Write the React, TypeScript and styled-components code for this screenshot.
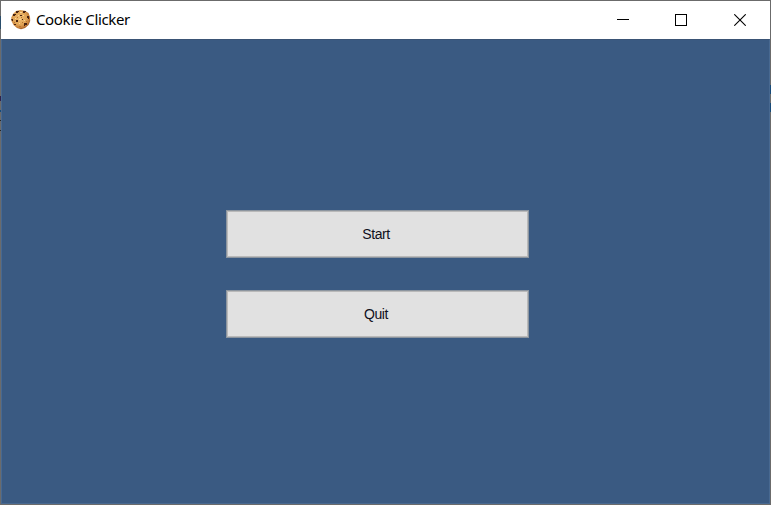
import React from 'react';
import styled, { createGlobalStyle } from 'styled-components';

const GlobalStyle = createGlobalStyle`
  * { box-sizing: border-box; }
  body { margin: 0; overflow: hidden; }
`;

const Window = styled.div`
  width: 771px;
  height: 505px;
  display: flex;
  flex-direction: column;
  border: 1px solid #6b6b6b;
  background: #fff;
`;

const TitleBar = styled.header`
  height: 38px;
  flex: none;
  display: flex;
  align-items: center;
  padding-left: 10px;
  background: #fff;
`;

const Title = styled.h1`
  margin: 0 0 2px 5px;
  flex: 1;
  font: 400 15px/20px 'Noto Sans', 'Open Sans', sans-serif;
  letter-spacing: -0.36px;
  color: #000;
`;

const Controls = styled.div`
  display: flex;
  height: 100%;
`;

const ControlButton = styled.button<{ $width: number }>`
  width: ${(p) => p.$width}px;
  height: 100%;
  padding: 0;
  border: 0;
  background: transparent;
  display: flex;
  align-items: center;
  justify-content: center;
`;

const Client = styled.main`
  flex: 1;
  display: flex;
  flex-direction: column;
  align-items: flex-start;
  gap: 32px;
  padding: 170px 0 0 224px;
  background: #3a5a82;
  border: 1px solid #486991;
  border-top-color: #3a5475;
`;

const MenuButton = styled.button`
  width: 303px;
  height: 48px;
  padding: 0 3px 0 0;
  border: 1px solid #8c959f;
  box-shadow: inset 0 0 0 1px #b9b9b9;
  background: #e1e1e1;
  color: #10101c;
  font: 400 14px/16px 'Liberation Sans', Arial, sans-serif;
  letter-spacing: -0.45px;
`;

const CookieIcon = () => (
  <svg width="20" height="20" viewBox="0 0 20 20">
    <defs>
      <radialGradient id="dough" cx=".45" cy=".42" r=".6">
        <stop offset="0" stopColor="#f0bd72" />
        <stop offset=".6" stopColor="#e0a355" />
        <stop offset=".85" stopColor="#c47c37" />
        <stop offset="1" stopColor="#85441a" />
      </radialGradient>
    </defs>
    <path d="M5 1 9 0l5 .8L17.5 3 19 7l.2 4-1.7 4L14 18l-4 1.3L6 18l-3.5-3L.5 11 .3 7.5 2 4Z" fill="url(#dough)" />
    <g fill="#4a2412">
      <path d="M5 1h3v1H7v1H5zM12 1h3v1h-1v1h-2zM2 4h3v1H4v1H2zM9 5h2v1H9zM16 6h2v3h-1V8h-1zM5 10h2v2H5zM0 9h2v2H1zM3 14h2v1H3zM13 13h3v2h-2v1h-1zM11 9h1v1h-1z" />
    </g>
    <g fill="#fbd596">
      <path d="M9 2h2v1H9zM7 5h1v1H7zM12 5h1v1h-1zM4 8h1v1H4zM8 9h2v1H8zM8 13h1v1H8zM13 10h1v1h-1z" />
    </g>
    <g fill="#b97333">
      <path d="M6 7h1v1H6zM10 7h1v1h-1zM3 12h1v1H3zM8 16h2v1H8zM11 12h1v1h-1zM15 11h1v1h-1z" />
    </g>
  </svg>
);

const MinimizeIcon = () => (
  <svg width="12" height="12" viewBox="0 0 12 12" shapeRendering="crispEdges">
    <rect y="5" width="12" height="1" />
  </svg>
);

const MaximizeIcon = () => (
  <svg width="12" height="12" viewBox="0 0 12 12" shapeRendering="crispEdges">
    <path d="M.5.5h11v11H.5z" fill="none" stroke="#000" />
  </svg>
);

const CloseIcon = () => (
  <svg width="12" height="12" viewBox="0 0 12 12">
    <path d="m.3.3 11.4 11.4m0-11.4L.3 11.7" fill="none" stroke="#000" strokeWidth="1.1" />
  </svg>
);

/* Slivers of the desktop that show through the window's thin frame. */
const EdgeSliver = styled.i<{ $side: 'left' | 'right'; $top: number; $height: number; $color: string }>`
  position: absolute;
  ${(p) => p.$side}: 0;
  top: ${(p) => p.$top}px;
  width: 1px;
  height: ${(p) => p.$height}px;
  background: ${(p) => p.$color};
`;

const Frame = styled.div`
  position: relative;
  width: 771px;
  height: 505px;
`;

export default function App() {
  return (
    <Frame>
      <GlobalStyle />
      <Window>
        <TitleBar>
          <CookieIcon />
          <Title>Cookie Clicker</Title>
          <Controls>
            <ControlButton $width={58} aria-label="Minimize"><MinimizeIcon /></ControlButton>
            <ControlButton $width={58} aria-label="Maximize"><MaximizeIcon /></ControlButton>
            <ControlButton $width={60} aria-label="Close"><CloseIcon /></ControlButton>
          </Controls>
        </TitleBar>
        <Client>
          <MenuButton>Start</MenuButton>
          <MenuButton>Quit</MenuButton>
        </Client>
      </Window>
      <EdgeSliver $side="left" $top={16} $height={13} $color="#294d6b" />
      <EdgeSliver $side="left" $top={96} $height={5} $color="#30204a" />
      <EdgeSliver $side="left" $top={110} $height={2} $color="#174a78" />
      <EdgeSliver $side="left" $top={120} $height={1} $color="#252525" />
      <EdgeSliver $side="left" $top={130} $height={1} $color="#252525" />
      <EdgeSliver $side="right" $top={85} $height={9} $color="#174a78" />
      <EdgeSliver $side="right" $top={103} $height={9} $color="#174a78" />
    </Frame>
  );
}
